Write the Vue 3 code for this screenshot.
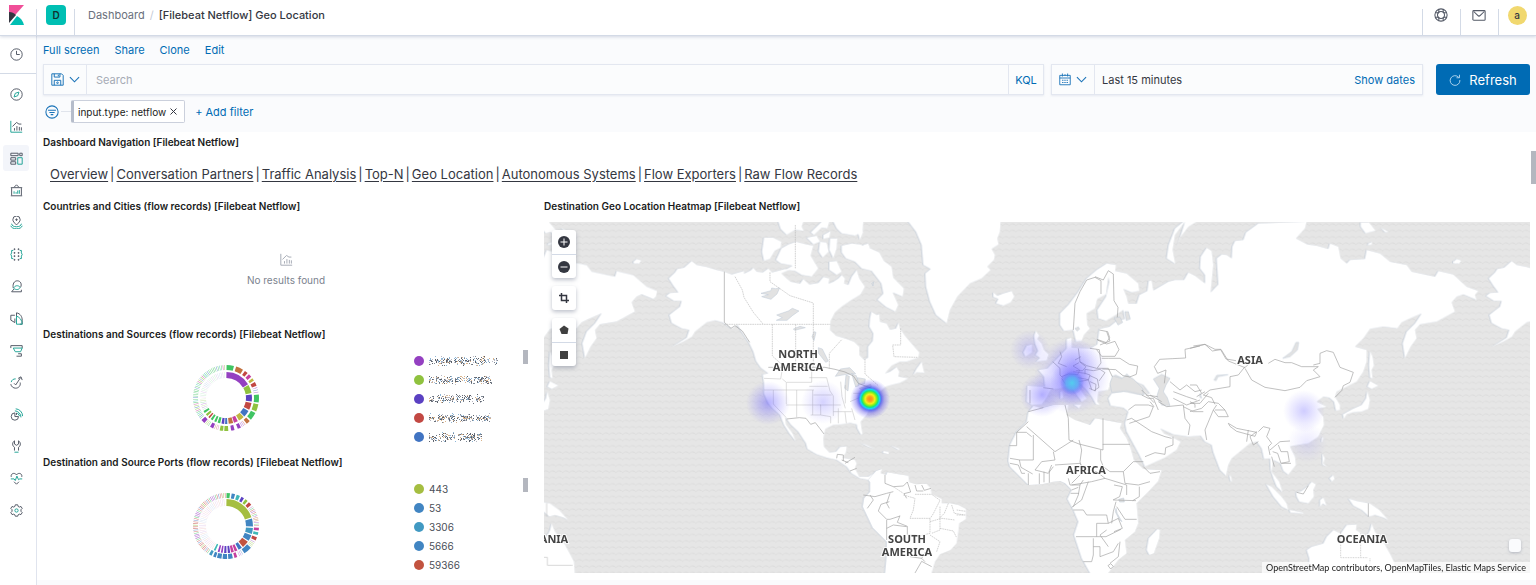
<script setup>
const apps = [
  { name: 'Discover', d: 'M8 1a7 7 0 1 0 0 14A7 7 0 0 0 8 1z', t: 'M5 11l1.5-4.5L11 5 9.500 9.500z' },
  { name: 'Visualize', d: 'M3 8l5-5 3 2h3 M5.500 13v-3 M8.500 13V7.500 M11.500 13V8.500 M14 13V9', t: 'M1 1v14h14' },
  { name: 'Dashboard', d: 'M1 1.500h9v3H1z M12 1.500h3v3h-3z M1 7h6v3H1z M1 12h6v3H1z', t: 'M9.500 7h5.500v8H9.500z', on: true },
  { name: 'Canvas', d: 'M5 4l3-3 3 3 M1 4.500h14 M2 5v9 M14 5v9 M1 14.500h14', t: 'M5 12V9 M7.500 12v-2 M9.500 12V8 M11.500 12V7.500' },
  { name: 'Maps', d: 'M8 11C5 8 3.500 6.500 3.500 4.500a4.500 4.500 0 0 1 9 0C12.500 6.500 11 8 8 11z M8 3v3 M6.500 4.500h3', t: 'M2 9.500c0 5 12 5 12 0 M1 12c1 5 13 5 14 0' },
  { name: 'Machine Learning', d: 'M5 1h1v1H5z M10 1h1v1h-1z M5 5.500h1v1H5z M10 5.500h1v1h-1z M5 9.500h1v1H5z M10 9.500h1v1h-1z M5 14h1v1H5z M10 14h1v1h-1z', t: 'M4 3H2v3L1 8l1 2v3h2 M12 3h2v3l1 2-1 2v3h-2' },
  { name: 'Metrics', d: 'M4 10c-1-5 1-9 5-9s6 4 4 8 M5 11l-3 3.500h12V12', t: 'M4.500 10C6 6.500 10 6 12.500 9 11 12.500 7 12.500 4.500 10z' },
  { name: 'Logs', d: 'M6 4H1v6l5 3V8 M8 5V1c5 1 7 5 7 9v5h-3', t: 'M8 5v10h7C15 10 12 6.500 8 5z' },
  { name: 'APM', d: 'M1 5V2h14v3 M8 15h6v-3h-4', t: 'M4 5h11l-2 4.500H6.500z' },
  { name: 'Uptime', d: 'M12.500 8c1 4-2 7-5.500 7-3 0-5.500-2-6-5 M5 9l2 2 6-9 M10 3l3.500-2L15 5', t: 'M1.500 7.500C2 5 4 3.500 7 3.500' },
  { name: 'SIEM', d: 'M6 6a4.500 4.500 0 1 0 4.500 4.500H6z M8 8.500V6', t: 'M6 3.500a8 8 0 0 1 7.500 8 M7 1a9 9 0 0 1 8.500 9 M9 6l3 4' },
  { name: 'Dev Tools', d: 'M5.500 13V9C2.500 7 2.500 3 5.500 1v4l2.500 1.500L10.500 5V1c3 2 3 6 0 8v4', t: 'M5.500 15h5' },
  { name: 'Stack Monitoring', d: 'M1.500 6C.500 2 5.500 0 8 3.500 10.500 0 15.500 2 14.500 6 M5 12l3 3 3-3', t: 'M1 8.500h4l1.500 2L8.500 5l2 4.500L12 8.500h3' },
  { name: 'Management', d: 'M6.500 1h3l.5 2 1.500.8 2-.8 1.500 2.500L13.500 7v2l1.500 1.500-1.500 2.500-2-.5-1.500.8-.5 1.700h-3L6 13.300l-1.500-.8-2 .5L1 10.500 2.500 9V7L1 5.500 2.500 3l2 .8L6 3z', t: 'M8 6a2 2 0 1 0 0 4 2 2 0 0 0 0-4z' },
]
const menu = ['Full screen', 'Share', 'Clone', 'Edit']
const links = ['Overview', 'Conversation Partners', 'Traffic Analysis', 'Top-N', 'Geo Location', 'Autonomous Systems', 'Flow Exporters', 'Raw Flow Records']

const G = '#40c463', V = '#9440c1', L = '#8fc23f', I = '#5b41c2', R = '#c24843', B = '#4174c2', O = '#bfb743', P = '#c6409f', N = '#c2713f', T = '#3fb8b8', U = '#4185c2'

function arc(r0, r1, a, b) {
  const p = (r, deg) => {
    const t = (deg * Math.PI) / 180
    return (r * Math.sin(t)).toFixed(2) + ' ' + (-r * Math.cos(t)).toFixed(2)
  }
  const big = b - a > 180 ? 1 : 0
  return `M${p(r1, a)}A${r1} ${r1} 0 ${big} 1 ${p(r1, b)}L${p(r0, b)}A${r0} ${r0} 0 ${big} 0 ${p(r0, a)}Z`
}
function thin(from, to, step, width, colors, fade) {
  const out = []
  let i = 0
  for (let a = from; a < to; a += step) {
    out.push([a, a + width, colors[(i + (i * i >> 2)) % colors.length], fade])
    i++
  }
  return out
}
function ring(r0, r1, list) {
  return list.map(([a, b, fill, o]) => ({ d: arc(r0, r1, a, b), fill, o: o || 1 }))
}
const donut1 = [
  ...ring(20, 26, [[1, 58, V], [60, 79, L], [82, 98, I], [101, 117, R], [120, 135, B], [137, 150, O], [153, 162, P], [164, 174, N], [177, 182, B], [184, 190, I], [193, 199, G], [202, 207, G], [211, 216, G], [219, 223, R], [226, 231, L], [235, 240, G],
    ...thin(243, 270, 4, 1, [G, V, P, L], 0.45), ...thin(272, 358, 4, 1, [V, G, R, G, B], 0.25)]),
  ...ring(28, 33, [[1, 14, G], [18, 31, N], [35, 41, R], [44, 50, P], [53, 58, O], [61, 68, R], ...thin(71, 82, 4, 1, [V, B, R], 0.7), [84, 98, G], [101, 114, L], [117, 131, G], [134, 141, N], ...thin(144, 151, 3, 1, [R, V], 0.6), [153, 159, V], [165, 171, V], [176, 183, L], [185, 191, L], ...thin(194, 201, 3, 1, [P, R], 0.5), [203, 209, V], ...thin(212, 219, 3, 1, [G, L], 0.6), [221, 228, V],
    ...thin(231, 359, 3, 1, [G, B, P, G, V, T, L, G, G], 0.7)]),
]
const donut2 = [
  ...ring(20, 27, [[1, 71, '#a5be41'], [74, 91, U], [94, 107, '#4199c2'], [110, 123, U], [126, 141, '#c2533f'], [144, 152, B], [155, 161, P], [163, 169, P], [171, 176, I], [179, 184, I], [187, 191, V], [194, 198, V], [203, 207, T],
    ...thin(211, 358, 4, 1, [R, V, G, P, B], 0.22)]),
  ...ring(28, 33, [[1, 7, G], [10, 16, U], [19, 25, T], [28, 33, I], [36, 41, L], [44, 50, R], ...thin(53, 91, 3, 1, [V, G, B, R, N], 0.65), [93, 98, P], [101, 106, T], [110, 116, R], ...thin(119, 129, 3, 1, [V, L], 0.5), [131, 146, U], ...thin(149, 158, 3, 1, [B, V], 0.5), [160, 165, P], [168, 176, U], [178, 186, U], [188, 196, U], [198, 203, U], [206, 211, '#4199c2'],
    ...thin(214, 359, 3, 1, [G, R, P, B, L, R, V], 0.7)]),
]

function speckle(width, seed) {
  let s = seed
  const rnd = () => (s = (s * 16807) % 2147483647) / 2147483647
  const inks = ['#5a5f68', '#7e8894', '#8fb7d8', '#d9b48c', '#696f7a', '#b9b9c4']
  const out = []
  for (let i = 0; i < width * 4; i++) {
    const x = Math.floor(rnd() * width)
    const y = Math.floor((rnd() + rnd()) * 5)
    if ((x + seed) % 19 < 2 && y < 7) continue
    out.push({ x, y, c: inks[Math.floor(rnd() * inks.length)] })
  }
  return out
}
const hosts = [
  { c: V, w: 69 }, { c: L, w: 64 }, { c: I, w: 55 }, { c: R, w: 62 }, { c: B, w: 53 },
].map((h, i) => ({ ...h, dots: speckle(h.w, 91 + i * 37) }))
const ports = [
  { c: '#a5be41', n: '443' }, { c: U, n: '53' }, { c: '#4199c2', n: '3306' }, { c: U, n: '5666' }, { c: '#c2533f', n: '59366' },
]
</script>

<template>
  <div class="app">
    <header class="top">
      <a href="#" class="logo" aria-label="Kibana home">
        <svg width="16" height="20" viewBox="0 0 16 20"><path d="M0 0h15L0 17z" fill="#f04e98" /><path d="M0 7c3 0 5 1 7 3L0 18z" fill="#343741" /><path d="M8 11c4 2 6 5 7 9H1z" fill="#00bfb3" /></svg>
      </a>
      <div class="space"><button class="badge">D</button></div>
      <nav class="crumbs" aria-label="Breadcrumbs"><a href="#">Dashboard</a><i>/</i><strong>[Filebeat Netflow] Geo Location</strong></nav>
      <div class="tools">
        <button aria-label="Help"><svg width="14" height="14" viewBox="0 0 16 16" class="ln"><circle cx="8" cy="8" r="7" /><circle cx="8" cy="8" r="4" /><path d="M5.500 1.500v4M10.500 1.500v4M5.500 10.500v4M10.500 10.500v4M1.500 5.500h4M1.500 10.500h4M10.500 5.500h4M10.500 10.500h4" /></svg></button>
        <button aria-label="News"><svg width="14" height="14" viewBox="0 0 16 16" class="ln"><rect x="1" y="3" width="14" height="11" rx="1" /><path d="M2 4l4.500 4.500q1.500 1.500 3 0L14 4" /></svg></button>
        <button aria-label="Account"><span class="avatar">a</span></button>
      </div>
    </header>

    <div class="body">
      <nav class="side" aria-label="Applications">
        <a href="#" class="recent" aria-label="Recently viewed"><svg width="13" height="13" viewBox="0 0 16 16" class="ln"><circle cx="8" cy="8" r="7" /><path d="M8 3.500V8h4" /></svg></a>
        <div class="apps">
          <a v-for="a in apps" :key="a.name" href="#" :class="{ on: a.on }" :aria-label="a.name">
            <svg width="13" height="13" viewBox="0 0 16 16" class="ln"><path :d="a.d" /><path :d="a.t" class="teal" /></svg>
          </a>
        </div>
      </nav>

      <main>
        <section class="query">
          <div class="menu"><button v-for="m in menu" :key="m">{{ m }}</button></div>
          <div class="bar">
            <div class="field search">
              <button class="pick" aria-label="Saved queries">
                <svg width="13" height="13" viewBox="0 0 16 16" class="ln blue"><path d="M1 1h12l2 2v12H1zM4 1v4h7V1M4 15V9h8v6M9 2v2" /><circle cx="8" cy="12" r="1" /></svg>
                <svg width="11" height="11" viewBox="0 0 12 12" class="ln blue"><path d="M1 3.500l5 5 5-5" /></svg>
              </button>
              <input type="text" placeholder="Search" aria-label="Search" />
              <button class="kql">KQL</button>
            </div>
            <div class="field date">
              <button class="pick" aria-label="Quick dates">
                <svg width="12" height="13" viewBox="0 0 16 16" class="ln blue"><path d="M1 2.500h14V15H1zM1 6h14M4.500 0v4M11.500 0v4M8 1v2M4 9h2M7 9h2M10 9h2M4 12h2M7 12h2M10 12h2" /></svg>
                <svg width="11" height="11" viewBox="0 0 12 12" class="ln blue"><path d="M1 3.500l5 5 5-5" /></svg>
              </button>
              <button class="range">Last 15 minutes</button>
              <button class="show">Show dates</button>
            </div>
            <button class="refresh"><svg width="12" height="12" viewBox="0 0 16 16" class="ln"><path d="M13 4.500A6.500 6.500 0 1 0 14.500 8M14 1v4h-4" /></svg>Refresh</button>
          </div>
          <div class="filters">
            <button class="fico" aria-label="Filter options"><svg width="14" height="14" viewBox="0 0 16 16" class="ln blue"><circle cx="8" cy="8" r="7" /><path d="M3.500 6h9M5 8.500h6M6.500 11h3" /></svg></button>
            <span class="dash"></span>
            <span class="pill">input.type: netflow<button aria-label="Remove filter"><svg width="7" height="7" viewBox="0 0 7 7"><path d="M.5.5l6 6M6.500.5l-6 6" /></svg></button></span>
            <button class="add">+ Add filter</button>
          </div>
        </section>

        <section class="dash-body">
          <article class="navpanel">
            <h2>Dashboard Navigation [Filebeat Netflow]</h2>
            <p class="links"><template v-for="(l, i) in links" :key="l"><span v-if="i">|</span><a href="#">{{ l }}</a></template></p>
          </article>
          <div class="grid">
            <div class="left">
              <article class="panel">
                <h2>Countries and Cities (flow records) [Filebeat Netflow]</h2>
                <div class="empty">
                  <svg width="13" height="13" viewBox="0 0 16 16" class="ln"><path d="M1 1v14h14M3 8l5-5 3 2h3M5.500 13v-3M8.500 13V7.500M11.500 13V8.500M14 13V9" /></svg>
                  <span>No results found</span>
                </div>
              </article>
              <article class="panel">
                <h2>Destinations and Sources (flow records) [Filebeat Netflow]</h2>
                <div class="chart">
                  <div class="pie"><svg width="68" height="68" viewBox="-34 -34 68 68"><path v-for="(s, i) in donut1" :key="i" :d="s.d" :fill="s.fill" :opacity="s.o" /></svg></div>
                  <ul>
                    <li v-for="(h, i) in hosts" :key="i"><svg width="10" height="10"><circle cx="5" cy="5" r="5" :fill="h.c" /></svg><svg :width="h.w" height="10"><rect v-for="(q, k) in h.dots" :key="k" :x="q.x" :y="q.y" width="1" height="1" :fill="q.c" /></svg></li>
                  </ul>
                  <span class="thumb"></span>
                </div>
              </article>
              <article class="panel">
                <h2>Destination and Source Ports (flow records) [Filebeat Netflow]</h2>
                <div class="chart">
                  <div class="pie"><svg width="68" height="68" viewBox="-34 -34 68 68"><path v-for="(s, i) in donut2" :key="i" :d="s.d" :fill="s.fill" :opacity="s.o" /></svg></div>
                  <ul>
                    <li v-for="p in ports" :key="p.n"><svg width="10" height="10"><circle cx="5" cy="5" r="5" :fill="p.c" /></svg>{{ p.n }}</li>
                  </ul>
                  <span class="thumb"></span>
                </div>
              </article>
            </div>

            <article class="panel">
              <h2>Destination Geo Location Heatmap [Filebeat Netflow]</h2>
              <div class="map">
                <svg class="world" viewBox="544 222 986 351" role="img" aria-label="World heatmap">
                  <defs>
                    <pattern id="waves" width="20" height="19" patternUnits="userSpaceOnUse"><rect width="20" height="19" fill="#e6e6e6" /><path d="M0 8q3 0 5 3t5 0 5-3 5 0" fill="none" stroke="#d9d9d9" stroke-width="2.500" /></pattern>
                    <filter id="shore" x="-5%" y="-5%" width="110%" height="110%"><feDropShadow dx="-2" dy="0" stdDeviation=".5" flood-color="#b4c2d4" flood-opacity=".8" /></filter>
                    <radialGradient id="hot"><stop offset="0" stop-color="#ff8a1f" /><stop offset=".12" stop-color="#ffa31a" /><stop offset=".24" stop-color="#f4f01c" /><stop offset=".34" stop-color="#7df01e" /><stop offset=".41" stop-color="#17e47c" /><stop offset=".48" stop-color="#18d4f4" /><stop offset=".57" stop-color="#3a4cf0" stop-opacity=".75" /><stop offset=".72" stop-color="#5a4ce6" stop-opacity=".4" /><stop offset="1" stop-color="#6a62ff" stop-opacity="0" /></radialGradient>
                    <radialGradient id="cool"><stop offset="0" stop-color="#5a50ff" stop-opacity=".65" /><stop offset=".5" stop-color="#6a60ff" stop-opacity=".34" /><stop offset="1" stop-color="#7a70ff" stop-opacity="0" /></radialGradient>
                    <radialGradient id="cyan"><stop offset="0" stop-color="#53cfee" /><stop offset=".5" stop-color="#5bb2f2" stop-opacity=".8" /><stop offset="1" stop-color="#5a60f0" stop-opacity="0" /></radialGradient>
                  </defs>
                  <g transform="translate(540 215) scale(.33333)">
                    <rect x="0" y="0" width="3000" height="1100" fill="url(#waves)" />
                    <g filter="url(#shore)" fill="#fff">
                      <g id="america">
                        <path d="M386 190L405 172 412 162 432 158 455 138 470 150 500 156 530 165 552 170 575 178 612 168 612 176 632 166 640 158 650 170 668 172 685 160 696 172 735 162 748 165 724 175 740 190 752 200 780 206 790 192 808 208 835 204 850 186 868 190 866 206 880 200 895 190 905 180 915 190 912 205 925 210 935 185 950 165 958 190 975 215 962 238 935 255 905 275 885 292 872 318 870 345 888 362 920 372 942 380 958 395 958 420 972 434 984 428 984 395 998 378 1000 355 988 335 990 310 994 290 1010 300 1018 298 1020 320 1040 325 1050 344 1068 340 1076 322 1080 340 1095 362 1112 382 1138 412 1135 428 1100 440 1080 440 1055 452 1035 475 1050 470 1070 456 1078 470 1075 484 1105 490 1080 504 1055 510 1035 516 1010 540 1000 560 990 580 980 600 962 620 965 640 968 658 962 658 952 640 950 628 930 624 905 628 880 630 856 642 850 670 852 695 868 712 888 710 900 696 920 694 918 712 908 728 945 735 950 745 945 760 958 785 985 785 1000 775 985 795 960 790 935 775 920 755 890 735 860 728 830 718 802 702 798 685 775 650 752 628 735 605 738 628 758 655 768 680 748 655 732 630 720 600 698 580 685 565 672 535 672 505 668 478 685 475 662 458 648 438 640 410 628 385 608 355 592 330 575 342 548 322 525 316 500 322 480 338 465 350 456 365 430 380 395 396 440 368 448 345 425 340 395 324 388 300 405 286 420 275 425 258 402 258 378 243 390 234 415 232 400 212Z" />
                        <path d="M672 68L700 68 724 80 722 98 704 108 690 132 672 138 666 110Z" />
                        <path d="M724 100L745 88 768 80 800 88 820 92 812 122 835 160 815 185 785 180 765 168 735 165 758 152 722 145 708 135Z" />
                        <path d="M715 20L790 20 785 35 792 48 765 45 740 60 722 42Z M845 20L868 20 862 40 845 38 822 60 812 52Z M880 20L970 20 968 50 945 62 905 55 890 40Z M850 60L872 48 868 68 850 72Z M800 68L830 62 840 80 820 88Z M870 70L892 70 890 100 880 130 868 105Z" />
                        <path d="M840 80L860 82 866 110 848 128 836 110Z M868 140L890 138 905 170 890 180 868 165Z" />
                        <path d="M905 92L935 85 960 88 992 100 1018 112 1032 138 1055 155 1060 188 1092 220 1088 245 1058 232 1075 270 1066 290 1038 276 1012 254 1030 236 1024 205 995 168 965 160 945 140 918 130 905 112Z M970 90L985 85 992 105 978 110Z M950 40L970 50 960 75Z" />
                        <path d="M1120 480L1130 460 1145 440 1152 470 1155 474 1130 472Z M1050 690h0l30 12-5 3zM962 684l15 4 28 14-20-6z" />
                        <path d="M1105 20L1382 20 1380 50 1372 70 1376 88 1355 102 1365 120 1362 135 1342 155 1352 165 1325 190 1290 205 1252 245 1230 285 1220 325 1188 300 1170 260 1158 215 1156 175 1172 162 1150 150 1145 90 1128 50Z" />
                        <path d="M280 140l10-8 12 5-5 8-15 1z" />
                      </g>
                      <path transform="translate(960 540)" d="M35 242L48 228 66 222 62 235 78 240 82 232 115 238 145 242 148 262 168 268 200 266 212 280 215 297 245 312 245 325 270 325 295 330 318 342 318 372 298 385 295 410 290 445 272 465 240 478 225 500 215 534 75 534 80 480 80 440 60 420 38 398 20 360 8 335 12 310 30 290 30 262 25 255Z M70 168l15 2 2 8-18-4z" />
                      <g transform="translate(960 0)">
                        <path d="M400 232L412 242 430 235 455 228 463 245 452 262 430 272 408 265 415 252 400 246Z" />
                        <path d="M528 348L538 362 532 372 545 385 552 405 566 418 560 436 528 440 540 428 526 420 534 408 525 385 522 362Z M500 392L516 388 516 412 496 425 490 412Z" />
                        <path d="M600 295L625 270 655 230 680 190 710 165 740 145 768 150 765 172 750 165 745 185 738 238 712 252 705 280 680 295 682 330 690 340 672 360 665 378 648 380 640 345 612 348 600 330Z" />
                        <path d="M975 20L945 60 938 105 946 147 920 130 926 90 945 40 970 20L1010 20 985 36 962 66 950 100Z" />
                        <path d="M740 160L765 168 800 175 835 205 838 228 815 232 790 222 800 245 805 266 830 266 838 240 862 228 866 198 875 196 880 226 925 200 945 195 972 195 985 172 1005 182 1035 205 1035 180 1020 160 1022 125 1040 98 1055 108 1060 150 1055 200 1052 232 1075 208 1070 130 1085 118 1100 120 1115 130 1117 95 1125 78 1150 75 1158 52 1195 25 1340 20 1335 40 1308 70 1342 88 1370 92 1405 102 1410 85 1435 95 1442 130 1460 145 1470 135 1515 132 1520 105 1560 115 1590 140 1640 150 1655 170 1725 185 1735 168 1780 178 1820 215 1855 228 1845 240 1850 255 1810 238 1790 245 1775 262 1785 290 1730 320 1680 328 1665 345 1670 370 1652 395 1635 430 1628 385 1640 350 1665 325 1685 295 1650 310 1625 322 1612 340 1570 335 1530 342 1510 370 1485 395 1520 405 1520 440 1510 470 1490 500 1460 515 1430 530 1425 545 1440 570 1440 585 1428 588 1422 560 1408 548 1390 545 1370 560 1400 575 1372 582 1390 605 1392 630 1375 665 1345 685 1315 690 1290 694 1305 725 1308 750 1285 780 1270 768 1262 745 1240 735 1235 770 1258 800 1268 832 1250 815 1240 790 1232 765 1230 730 1212 732 1205 700 1190 680 1170 685 1115 730 1105 750 1098 783 1080 765 1060 712 1055 690 1035 680 1022 662 985 665 940 658 895 638 888 625 912 655 935 665 962 680 950 705 915 728 855 755 838 720 800 650 795 625 805 590 790 578 752 572 745 550 755 535 790 530 840 540 870 535 850 510 820 498 800 475 790 490 765 478 752 500 745 525 715 530 712 560 720 570 708 568 695 545 680 525 660 505 650 500 662 525 680 550 665 560 650 540 630 510 600 520 572 524 560 548 545 568 515 570 500 560 502 512 555 515 552 485 535 465 562 460 590 432 620 400 620 372 635 368 635 398 690 400 712 388 718 342 748 335 770 318 795 312 790 285 770 298 738 318 715 310 712 285 738 245 748 200Z" />
                        <path d="M600 530l8-2 2 20-9 4zM640 568l25 0-8 12z" />
                      </g>
                      <path transform="translate(960 540)" d="M520 32L545 40 580 30 625 30 620 60 645 75 690 90 705 70 785 85 780 100 800 130 812 160 822 195 850 222 905 226 895 258 865 290 830 325 835 385 825 410 795 435 800 475 775 495 745 534 690 534 665 490 642 420 655 380 640 345 622 312 635 285 615 265 600 258 580 260 545 268 505 270 475 240 450 215 445 198 450 150 470 110 500 80 505 52Z M892 402L900 405 898 430 882 475 868 480 860 465 866 430Z" />
                      <g id="orient" transform="translate(1950 0)">
                        <path d="M540 408L548 425 552 452 545 465 548 490 540 488 537 450Z M540 498L565 512 545 522 532 515Z M532 528L540 555 535 582 515 590 488 592 470 598 462 612 458 598 488 582 515 570 528 550Z" />
                        <path d="M228 807L245 815 275 845 290 865 295 885 275 875 250 845Z M298 884l40 8 3 4-40-3z M318 832L335 828 355 812 365 800 378 808 370 825 372 845 355 865 328 860 320 845Z M390 855l10-8 2 5 8 20-12-6-8 10z M397 715l8 15-5 15 12 10-14-5z M418 790l12-10 4 12-8 8z M396 668l4-2-2 15-4 0z M118 780l6 5 2 15-5-2z" />
                        <path d="M475 850L500 858 540 865 568 885 595 915 580 908 555 900 538 905 515 885 490 872Z M350 1005L365 995 400 985 410 965 430 945 452 955 470 930 500 928 498 945 530 965 540 945 545 925 555 950 580 980 602 1020 612 1040 615 1080 355 1080 358 1030Z" />
                        <path d="M512 22l25 0 20 25-30 8-15-20zM572 38l24 12-10 2zM535 85l12-4-2 8-12 2zM800 135l14 2-8 8z" />
                      </g>
                      <path transform="translate(-510 0)" d="M430 95L445 95 465 145 480 135 520 130 530 105 570 115 600 140 650 150 665 170 735 185 740 168 790 180 830 215 862 228 858 245 850 252 815 238 800 245 785 262 795 290 740 320 690 328 675 345 680 370 662 395 645 430 637 385 650 350 675 325 695 295 660 310 635 322 620 340 580 335 540 342 520 370 500 400Z M512 22l25 0 25 28 10 15-20-5z" />
                      <use href="#america" x="2460" />
                      <use href="#orient" x="-2460" />
                    </g>
                    <g fill="#e2e2e2" stroke="#bcc8d6" stroke-width="1.500">
                      <path d="M663 235l30-8 2-8 12 2 12-2-8 18-18 16-28-8 20-6z M710 300l35-12 12-8 20 8-20 14-16 14-32 0 18-8z M760 342l20-8 16 4-32 8z M816 365l6-15 6 2-6 25z M835 398l12 4 18 36-8 4-22-28z M886 484l15-22 28-4 18 18-28 2z M918 480l10 4-4 44-10-8z M935 476l14 6 8 30-10 4z M952 488l24 4-2 14-18 4z M958 520l34-12 2 8-30 8z M995 205l6-4-2 12z" />
                      <path transform="translate(960 0)" d="M758 482L785 490 800 480 820 492 848 520 850 540 800 528 755 532 750 505Z M880 492L905 478 930 490 918 510 910 530 922 548 930 572 905 570 890 545 898 520Z M762 308l18-2 8 16-14 8z M795 290l10 0 6 22-12 4z M645 340l10-4 4 6-8 6z" />
                      <path transform="translate(1950 0)" d="M278 430L305 410 318 382 326 382 322 405 300 425Z M72 495l8-14 34-2-30 6-6 12z M30 535l5 15-6-4z" />
                      <path d="M1736 853l15-4 2 12-14 0zM1728 880l4 16 14 24-8-6-12-24z" />
                    </g>
                    <g fill="none" stroke="#a2a2a2" stroke-width="2" stroke-linejoin="round">
                      <path d="M553 170v152l20 18 12-8 22 16 22 34M685 457h170l30 6 30 8 25 12 15 22 40 15M740 612l38-4 20 2 14 18 14-5 14 18 12 16M890 730l2-12 18 2 0 18M915 745l30-18M930 768l20-8M905 735l20 8" />
                      <path d="M553 328h318M697 328v95l38 34M767 328v130M820 265v192M585 185l22 40 5 22 28 45 30 36M690 172v28l60 42 70 22M868 450v-35l38-42M868 450v12M766 30v130M975 432v45l40 35M1082 340l0 50-24 0 4 35 70 2" stroke-dasharray="5 2" stroke="#bdbdbd" />
                      <path d="M672 490l50 2 5-30M727 492l12 10v65M672 525h150M740 502h75v-45M808 488h52M808 514h55M700 525v42l38 40M770 525v82M738 570h105M818 525v75M820 540h55M840 570h62M842 570v30l30 5v20M860 488l10 40 10 15v60M812 600h30M880 590h55M902 500l4 45 10 35M916 510v55M895 580v45M915 590l4 35M935 580l10 35M930 560l35-15M940 535h50" stroke="#bdbdbd" stroke-width="1.500" />
                      <g transform="translate(960 0)">
                        <path d="M640 345l5-80 15-35 20-35 25-8 18 10 0 40M705 185l25 10 15-28 15 10 2 80 12 20-2 30M718 345l25 5 6 18-10 15-28-10M740 350l10 28-30 12M712 375l28 12 25-8 12 25-12 20-40 0-15-20M690 400l28 4 5 40-12 16M725 430l20 0 35 0 28 18 25 5-4 25-20 8-20-4-22-18-40-2M645 435l18-10M655 400l5 40 20 12 30 8 35 0 12 25M600 410l5 15-10 20 25 10M578 440l22 20 0 20 8 8M605 485l20-8 28 2 6-14-20-12 18-10M658 440l20 15-10 12-20 0M640 470l35 5 15 5-5 15-30 5M675 478l0-15 25 4 20-4 15 10-18 25M690 482l22 10 5 25-15 10M690 500l18 8-2 20-18-8M655 488l30 6 10 30M550 518l30 4M510 525v40M605 490l12 18" />
                        <path d="M1020 393l-45 10 2 26-40 2-38 2-16 22 10 20 25-10-5 40M845 525l22 22 15 16M858 540l35 5M930 500l30 25 20-15 25 20 20-5M940 530l40 15 30 10M870 560l12 15M1000 393l35-5 22 20 25-4 16 28 30 5" />
                      </g>
                      <g transform="translate(960 540)">
                        <path d="M75 240v25l25 10 30-2 12-12 10 30-20 5 8 14M90 295l-10 30 8 15M10 300l35 5 35-10 20-5M30 300l10 15-18 25M88 320l-25 8-8 20 25 25 10 0 30-10M80 375v60M165 270l5 18 20 0M185 270l8 16 20-6M80 400l20-10 40 5M120 362l-8 20 30 12 0 25 25 0M150 485l35 5 12-20M165 534l20-35 30 16M185 490l10 10" />
                        <path d="M130 300l35 10-5 35-10 25 60 0 0 45-40 10M165 298l50 0 25 18-20 40-10 15M240 335l0 70-25 10M265 325l-12 30-15 15M275 330l8 25 30 5M290 345l28 4M290 360h28M240 400l40 8 10 20M210 420l30 20-10 30M100 275l30 20M210 380l35-10 40 5" stroke-dasharray="5 2" stroke="#bdbdbd" />
                        <path d="M505 50l45-12M470 112l35-32M500 112h-30v40h-22M500 95l85 75 55-35M520 120v75h-40l-30-5M515 125l-15-12M580 170l5 25-40 5-20 25 40 10 15-20M615 30l10 40 2 65 30 12 72 18V70M657 135l8 30-5 35 5 20M728 148h82M722 165v30l8 20 20 15 40 0 30-30 30 0M585 210l75-5 15 20-40 40M680 225l30 5 25 20-40 10-60 10M450 205l25 5 10 25 10 0M478 195l5 22 35 20M505 235v35M538 235v32M552 230v32M568 228v35M575 210l-8 20M625 250l5 20 30 0 10-15M660 270l-5 30-15 35M685 260l-20 55-30 22M735 250l65 20 0 30M790 230l5 35 40 5 35-10M838 275v30l-20 12M850 215l20 20 30-5M762 270l25 5-8 30-20 10M640 345h30l10 15h60l5 25-35 0v40M768 320l-8 30-5 35M760 315l68 2M770 335l25 38h35M745 385l30-15 12 30-25 10M648 425h90l45-22M700 430v50l-5 20h-25M700 455l20 0v30l40-15 15-25M740 405l-20 15 25 35M780 440l-5 45-25 20M744 512l8-6 8 8-8 8zM632 295h25M635 285l20-8" />
                        <path d="M805 45l20-15h40l15 5-12 30-60 20M800 75l15-5 60 40 40 15 20 5M855 185l30-12 30 5 2-20 22-8 0-25M845 0l20 10 15 0 15 35M870 0l35 20M895 20l25 15 50-5 5 40 15 20-5 30M940 10l40 20 40-15M970 35l30 15 30 0" />
                      </g>
                      <g transform="translate(1950 0)">
                        <path d="M0 400l45-12 30 15 18 0 22 35 50 20 15-15M165 460l20 35 40 22 60 10 45-10 20-20 40-12-20-20 15-10-50 0-30-12-20 0-30-10-20 12M370 450l20-5 0-30 20-8 20 5 20 45 40 15-10 30-20 10-5 15-20 20M165 455l-20 25-25 5 0 30-60 10-20 15 25 8 10 20M0 510l20 0 15 25M20 545l25-15M0 560l15 8 0 10" />
                        <path transform="translate(0 540)" d="M0 25l30 0 25-30M0 50l35-10 20-20M55 20l30 5 20 20 10 20-30 0-15-20 10-15M70 45l-25 60 5 30M75 45l30 0M115 85l25 15 60 12-5 12-55-15-20-15zM175 105l-5 35M200 110l-20 15 10 25 15-10M205 110l15-15 20 5-10 25 15 20-10 10 5 25M240 165l30-25 30-2M265 150l8 20 20 0 5 30-25 5-10-30-15-5M275 205l28 0M245 185l8 30M535 325v40M320 292l20 5 15-25" />
                        <path transform="translate(0 540)" d="M452 410v78h80M512 415v72M540 490v20" stroke-dasharray="3 2" stroke="#bdbdbd" />
                      </g>
                      <path d="M20 865v40M0 1027h22v24h75" stroke="#c4c4c4" />
                    </g>
                  </g>
                  <circle cx="870" cy="399" r="20" fill="url(#hot)" />
                  <g fill="url(#cool)">
                    <circle cx="768" cy="403" r="22" opacity=".7" /><circle cx="823" cy="402" r="22" opacity=".4" /><circle cx="1030" cy="350" r="20" opacity=".4" /><circle cx="1072" cy="376" r="38" opacity=".75" /><circle cx="1074" cy="362" r="24" opacity=".4" /><circle cx="1042" cy="395" r="22" opacity=".7" /><circle cx="1072" cy="383" r="22" /><circle cx="1304" cy="411" r="21" opacity=".45" /><circle cx="1307" cy="443" r="20" opacity=".2" />
                  </g>
                  <circle cx="1072" cy="383" r="12" fill="url(#cyan)" />
                  <g class="names">
                    <text x="798" y="358">NORTH</text><text x="798" y="371">AMERICA</text>
                    <text x="907" y="543">SOUTH</text><text x="907" y="556">AMERICA</text>
                    <text x="1086" y="474">AFRICA</text><text x="1250" y="364">ASIA</text>
                    <text x="1362" y="543">OCEANIA</text><text x="554" y="543">ANIA</text>
                  </g>
                </svg>
                <div class="ctrls">
                  <div><button aria-label="Zoom in"><svg width="12" height="12" viewBox="0 0 12 12"><circle cx="6" cy="6" r="6" fill="#343741" /><path d="M2.500 6h7M6 2.500v7" stroke="#fff" /></svg></button><button aria-label="Zoom out"><svg width="12" height="12" viewBox="0 0 12 12"><circle cx="6" cy="6" r="6" fill="#343741" /><path d="M2.500 6h7" stroke="#fff" /></svg></button></div>
                  <div><button aria-label="Fit to data"><svg width="10" height="10" viewBox="0 0 10 10"><path d="M2.500 0v7.500H10M0 2.500h7.500V10" fill="none" stroke="#343741" stroke-width="1.500" /></svg></button></div>
                  <div><button aria-label="Draw polygon"><svg width="10" height="10" viewBox="0 0 10 10"><path d="M5 .5l4.500 3L8.500 9h-6L.5 4z" fill="#404040" /></svg></button><button aria-label="Draw rectangle"><svg width="8" height="8"><rect width="8" height="8" fill="#404040" /></svg></button></div>
                </div>
                <button class="legend-toggle" aria-label="Toggle legend"></button>
                <div class="attr"><a href="#">OpenStreetMap contributors</a>, <a href="#">OpenMapTiles</a>, <a href="#">Elastic Maps Service</a></div>
              </div>
            </article>
          </div>
          <span class="scroll"></span>
        </section>
      </main>
    </div>
  </div>
</template>

<style>
body { background: #fafbfd; }
</style>

<style scoped>
* { box-sizing: border-box; }
.app { min-height: 100vh; display: flex; flex-direction: column; font-family: Inter, "Liberation Sans", sans-serif; font-size: 11px; color: #343741; }
button { font: inherit; color: inherit; background: none; border: 0; padding: 0; display: inline-flex; align-items: center; justify-content: center; }
a { color: inherit; text-decoration: none; }
h2, p, ul { margin: 0; padding: 0; }
svg { display: block; flex: none; }
.ln { fill: none; stroke: #535966; stroke-width: 1.200; }
.ln .teal { stroke: #22a396; }
.ln.blue { stroke: #1a73b8; }

.top { position: relative; z-index: 1; height: 36px; display: flex; background: #fff; border-bottom: 1px solid #d3dae6; box-shadow: 0 1px 3px rgba(120, 135, 165, .3); }
.logo { width: 37px; padding: 5px 0 0 9px; background: linear-gradient(#d3dae6, #d3dae6) right bottom / 1px 26px no-repeat; }
.space { width: 38px; padding: 5px 0 0 9px; background: linear-gradient(#d3dae6, #d3dae6) right bottom / 1px 26px no-repeat; }
.badge { width: 20px; height: 20px; border-radius: 4px; background: #00bfb3; font-weight: 600; font-size: 10px; color: #10322f; }
.crumbs { flex: 1; display: flex; padding-left: 13px; line-height: 31px; color: #6a717d; }
.crumbs i { color: #c5cad5; margin: 0 5px; font-style: normal; }
.crumbs strong { font-weight: 500; color: #343741; }
.tools { display: flex; }
.tools button { width: 38px; height: 35px; padding-bottom: 5px; background: linear-gradient(#d3dae6, #d3dae6) left bottom / 1px 26px no-repeat; }
.avatar { width: 19px; height: 19px; border-radius: 50%; background: #f1d86f; line-height: 19px; font-size: 10px; font-weight: 500; }

.body { flex: 1; display: flex; }
.side { width: 37px; background: #fff; border-right: 1px solid #e0e4ee; }
.recent { height: 38px; display: flex; align-items: center; justify-content: center; border-bottom: 1px solid #d3dae6; padding-right: 4px; }
.apps { padding: 7px 0 0 3px; display: grid; gap: 6px; }
.apps a { width: 26px; height: 26px; display: flex; align-items: center; justify-content: center; border-radius: 3px; }
.apps a.on { background: #f3f5fa; }
main { flex: 1; min-width: 0; display: flex; flex-direction: column; padding-bottom: 5px; }

.query { padding: 0 6px 9px; color: #006bb4; }
.menu { height: 28px; display: flex; gap: 15px; }
.bar { height: 31px; display: flex; }
.field { display: flex; background: #fbfcfd; border: 1px solid #e3e7f0; box-shadow: 0 1px 2px rgba(120, 135, 165, .15); }
.search { flex: 1; margin-right: 7px; }
.pick { width: 43px; gap: 5px; border-right: 1px solid #e3e7f0; }
.search input { flex: 1; min-width: 0; border: 0; background: none; padding: 0 9px; font: inherit; color: #343741; outline: 0; }
.search input::placeholder { color: #a6abb5; opacity: 1; }
.kql { width: 35px; border-left: 1px solid #e3e7f0; }
.date { width: 372px; margin-right: 13px; }
.range { flex: 1; justify-content: flex-start; padding-left: 7px; color: #343741; }
.show { padding-right: 7px; }
.refresh { width: 94px; gap: 8px; border-radius: 3px; background: #006bb4; color: #fff; font-size: 13px; }
.refresh .ln { stroke: #b9d9f0; }
.filters { margin-top: 5px; height: 23px; display: flex; align-items: center; }
.fico { width: 18px; }
.dash { width: 10px; height: 1px; background: #e0e4ec; }
.pill { height: 23px; display: flex; align-items: center; gap: 4px; padding: 0 7px 0 4px; border: 1px solid #cbd0dc; border-left: 3px solid #b6bdcb; border-radius: 2px; background: #fff; color: #1a1c21; font-size: 10px; }
.pill path { stroke: #343741; fill: none; }
.add { margin-left: 10px; }

.dash-body { flex: 1; position: relative; background: #fff; padding: 0 6px; }
h2 { font-size: 10px; font-weight: 600; line-height: 20px; height: 22px; color: #1a1c21; white-space: nowrap; }
.navpanel { height: 64px; }
.links { display: flex; gap: 2px; padding: 9px 0 0 7px; font-size: 13px; line-height: 22px; color: #343741; }
.links a { text-decoration: underline; text-underline-offset: 2px; }
.grid { display: grid; grid-template-columns: 1fr 2fr; gap: 8px; }
.left { display: grid; grid-template-rows: repeat(3, 128px); min-width: 0; }
.panel { min-width: 0; }
.empty { height: 86px; padding-top: 35px; padding-right: 7px; display: flex; flex-direction: column; align-items: center; gap: 8px; color: #7b828e; font-size: 10px; line-height: 13px; }
.empty .ln { stroke: #a6abb5; }
.chart { height: 104px; display: flex; }
.pie { width: 371px; display: flex; justify-content: center; align-items: center; padding-right: 6px; }
.chart ul { flex: 1; list-style: none; padding-top: 5px; }
.chart li { height: 19px; display: flex; align-items: center; gap: 5px; color: #4a4e57; font-size: 10px; }
.thumb { width: 5px; height: 14px; margin: 4px 8px 0 0; background: #b4b7bf; }

.map { position: relative; margin-top: 4px; overflow: hidden; }
.world { width: 100%; height: auto; }
.names { font: 700 11px "Noto Sans", "Open Sans", sans-serif; fill: #444; text-anchor: middle; stroke: #fff; stroke-width: 2px; stroke-opacity: .8; paint-order: stroke; }
.ctrls { position: absolute; left: 8px; top: 8px; display: grid; gap: 8px; }
.ctrls div { width: 24px; display: grid; background: #fff; border-radius: 3px; box-shadow: 0 2px 4px rgba(90, 100, 125, .4); }
.ctrls button { height: 24px; }
.ctrls button + button { border-top: 1px solid #d3dae6; }
.legend-toggle { position: absolute; right: 9px; bottom: 21px; width: 12px; height: 13px; border-radius: 3px; background: #fafbfd; box-shadow: 0 1px 3px rgba(90, 100, 125, .35); }
.attr { position: absolute; right: 0; bottom: 0; padding: 0 4px; background: rgba(255, 255, 255, .7); font: 9px/11px Lato, "Liberation Sans", sans-serif; color: #222; }
.scroll { position: absolute; right: 0; top: 19px; width: 5px; height: 33px; background: #b4b7bf; }
</style>
